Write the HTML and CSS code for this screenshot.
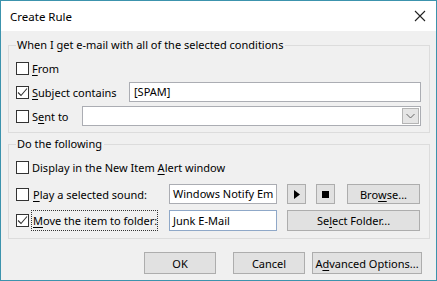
FILE: index.html
```html
<!doctype html>
<html lang="en">
<head>
    <meta charset="utf-8">
    <title>Create Rule</title>
    <link rel="stylesheet" href="styles.css">
</head>
<body>
<div class="window">
    <div class="titlebar">
        <span class="title">Create Rule</span>
        <svg class="close" width="12" height="12" viewBox="0 0 12 12"><path d="M1 1L11 11M11 1L1 11" stroke="#222" stroke-width="1.1"/></svg>
    </div>
    <div class="dialog">
        <fieldset class="group group-when">
            <legend>When I get e-mail with all of the selected conditions</legend>
            <div class="row">
                <span class="check"></span>
                <span class="label"><u>F</u>rom</span>
            </div>
            <div class="row">
                <span class="check checked"><svg width="11" height="11" viewBox="0 0 11 11"><path d="M1 5.5L4 8.5L10 1.5" fill="none" stroke="#333" stroke-width="1.1"/></svg></span>
                <span class="label label-subject"><u>S</u>ubject contains</span>
                <span class="textbox grow">[SPAM]</span>
            </div>
            <div class="row">
                <span class="check"></span>
                <span class="label label-sent">S<u>e</u>nt to</span>
                <span class="textbox combo grow">
                    <span class="drop"><svg width="9" height="6" viewBox="0 0 9 6"><path d="M0.5 1L4.5 5L8.5 1" fill="none" stroke="#666" stroke-width="1"/></svg></span>
                </span>
            </div>
        </fieldset>

        <fieldset class="group group-do">
            <legend>Do the following</legend>
            <div class="row row-display">
                <span class="check"></span>
                <span class="label">Display in the New Item <u>A</u>lert window</span>
            </div>
            <div class="row row-play">
                <span class="check"></span>
                <span class="label label-action"><u>P</u>lay a selected sound:</span>
                <span class="textbox field">Windows Notify Em</span>
                <span class="button icon-btn play-btn"><svg width="6" height="9" viewBox="0 0 6 9"><path d="M0 0L6 4.5L0 9Z" fill="#000"/></svg></span>
                <span class="button icon-btn stop-btn"><svg width="7" height="7" viewBox="0 0 7 7"><rect width="7" height="7" fill="#000"/></svg></span>
                <span class="button browse-btn">Bro<u>w</u>se...</span>
            </div>
            <div class="row row-move">
                <span class="check checked"><svg width="11" height="11" viewBox="0 0 11 11"><path d="M1 5.5L4 8.5L10 1.5" fill="none" stroke="#333" stroke-width="1.1"/></svg></span>
                <span class="label label-action focus"><u>M</u>ove the item to folder:</span>
                <span class="textbox field field-active">Junk E-Mail</span>
                <span class="button folder-btn">Se<u>l</u>ect Folder...</span>
            </div>
        </fieldset>

        <div class="buttons">
            <span class="button dlg-btn">OK</span>
            <span class="button dlg-btn cancel-btn">Cancel</span>
            <span class="button dlg-btn adv-btn">A<u>d</u>vanced Options...</span>
        </div>
    </div>
</div>
</body>
</html>
```

FILE: styles.css
```css
* {
	box-sizing: border-box;
}
body {
	margin: 0;
	font-family: "Noto Sans", "Open Sans", sans-serif;
	font-size: 11px;
	color: #000;
	background: #f0f0f0;
}
u {
	text-decoration-thickness: 1px;
	text-underline-offset: 2px;
}
.window {
	width: 437px;
	height: 281px;
	border: 1px solid #3c93ad;
	background: #f0f0f0;
	display: flex;
	flex-direction: column;
}
.titlebar {
	height: 30px;
	background: #fff;
	display: flex;
	align-items: center;
	justify-content: space-between;
	padding: 0 10px 0 9px;
	flex-shrink: 0;
}
.title {
	font-size: 11.5px;
	color: #000;
}
.dialog {
	padding: 6px 6px 0 7px;
	display: flex;
	flex-direction: column;
}
fieldset.group {
	margin: 0;
	border: 1px solid #dcdcdc;
	padding: 5px 8px 6px 7px;
	display: flex;
	flex-direction: column;
	gap: 4px;
}
fieldset.group legend {
	padding: 0 2px 0 1px;
	line-height: 16px;
}
.group-do {
	margin-top: 3px !important;
	gap: 6px !important;
	padding-bottom: 7px !important;
}
.row {
	display: flex;
	align-items: center;
	height: 20px;
}
.row-play {
	margin-top: 1px;
}
.row-move {
	height: 21px;
}
.check {
	width: 13px;
	height: 13px;
	border: 1px solid #333;
	background: #fff;
	flex-shrink: 0;
	display: flex;
	align-items: center;
	justify-content: center;
}
.label {
	margin-left: 3px;
	white-space: nowrap;
}
.label-subject {
	width: 97px;
}
.label-sent {
	width: 50px;
}
.label-action {
	margin-left: 2px;
	width: 127px;
	padding-left: 1px;
	height: 21px;
	line-height: 19px;
	border: 1px dotted transparent;
}
.label.focus {
	border-color: #333;
}
.textbox {
	height: 20px;
	background: #fff;
	border: 1px solid #abadb3;
	padding: 0 4px;
	line-height: 18px;
	white-space: nowrap;
	overflow: hidden;
}
.grow {
	flex: 1;
}
.combo {
	display: flex;
	justify-content: flex-end;
	align-items: center;
	padding: 0 1px;
}
.drop {
	width: 17px;
	height: 16px;
	background: #e5e5e5;
	border: 1px solid #b4b4b4;
	display: flex;
	align-items: center;
	justify-content: center;
}
.field {
	width: 108px;
	margin-left: 11px;
	padding: 0 3px;
}
.field-active {
	height: 21px;
	border-color: #8fa8c8;
	line-height: 19px;
}
.button {
	background: #e1e1e1;
	border: 1px solid #adadad;
	display: flex;
	align-items: center;
	justify-content: center;
	white-space: nowrap;
}
.icon-btn {
	width: 19px;
	height: 20px;
}
.play-btn {
	margin-left: 10px;
}
.stop-btn {
	margin-left: 10px;
}
.browse-btn {
	width: 73px;
	height: 20px;
	margin-left: 12px;
}
.folder-btn {
	width: 133px;
	height: 21px;
	margin-left: 10px;
}
.buttons {
	display: flex;
	justify-content: flex-end;
	margin-top: 13px;
	padding-right: 8px;
}
.dlg-btn {
	width: 72px;
	height: 22px;
}
.cancel-btn {
	margin-left: 17px;
}
.adv-btn {
	width: 110px;
	margin-left: 7px;
}
```
